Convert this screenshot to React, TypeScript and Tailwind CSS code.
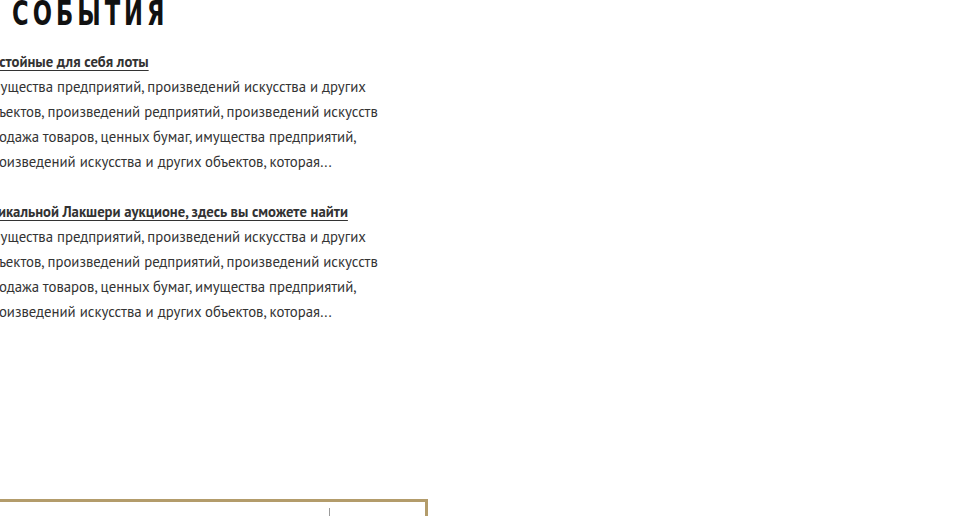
const events = [
  { hidden: 'до', visible: 'стойные для себя лоты' },
  { hidden: 'ун', visible: 'икальной Лакшери аукционе, здесь вы сможете найти' },
]

const bodyLines = [
  'имущества предприятий, произведений искусства и других',
  'объектов, произведений редприятий, произведений искусств',
  'продажа товаров, ценных бумаг, имущества предприятий,',
  'произведений искусства и других объектов, которая...',
]

export default function App() {
  return (
    <div className="w-[954px] h-[516px] overflow-hidden bg-white text-[#333]">
      {/* HEADER */}
      <h1
        className="ml-[12px] -mt-[5px] h-[46px] text-[34px] leading-[36px] font-bold tracking-[0.16em] text-[#111] uppercase origin-left scale-x-[0.74] whitespace-nowrap"
        style={{ fontFamily: '"DejaVu Sans Condensed", "DejaVu Sans", sans-serif' }}
      >
        События
      </h1>

      {/* EVENTS LIST */}
      <div
        className="-ml-[17px] mt-[9px] flex flex-col gap-[26px] text-[14.8px] leading-[25px]"
        style={{ fontFamily: '"PT Sans", Roboto, "Noto Sans", sans-serif' }}
      >
        {events.map((ev, i) => (
          <div key={i} className="flex flex-col whitespace-nowrap">
            <a className="font-bold underline underline-offset-[3px] text-[14.7px] leading-[24px] text-[#333]">
              {ev.hidden + ev.visible}
            </a>
            {bodyLines.map((line) => (
              <p key={line}>{line}</p>
            ))}
          </div>
        ))}
      </div>

      {/* CARD */}
      <div className="-ml-[20px] mt-[175px] w-[448px] h-[40px] border-[3px] border-[#b39c6b] flex">
        <div className="flex-1" />
        <div className="w-[96px] mt-[6px] border-l border-[#9a9a9a]" />
      </div>
    </div>
  )
}
